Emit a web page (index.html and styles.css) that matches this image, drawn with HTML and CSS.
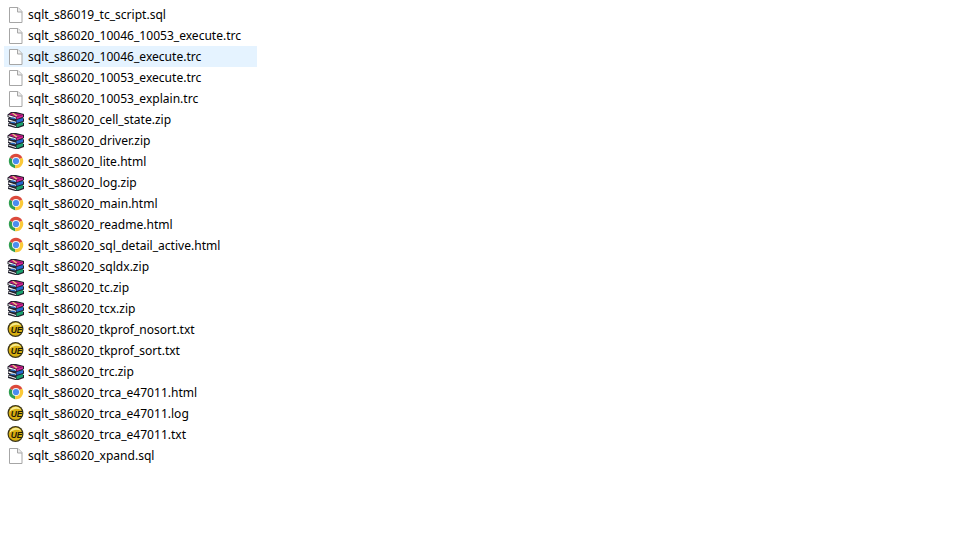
FILE: index.html
```html
<!DOCTYPE html>
<html lang="en">
<head>
<meta charset="utf-8">
<title>Files</title>
<link rel="stylesheet" href="styles.css">
</head>
<body>
<svg class="sprite" aria-hidden="true">
  <symbol id="doc" viewBox="0 0 18 17">
    <path d="M3.500 1.500h8.500l4 4v11h-12.500z" fill="#fff" stroke="#a6a6a6"/>
    <path d="M11.500 1.500v4.500h4.500" fill="#ececec" stroke="#a6a6a6"/>
  </symbol>
  <symbol id="rar" viewBox="0 0 18 17">
    <path d="M5 1h5l8 2v3l-1.500 1 1.500.5v3l-1.500 1 1.500.5v3l-7 2.500-9-2.500v-2.500l1.500-1-1.500-.5V7.500L3 6.500 1.500 6V3.500z" fill="#22222e"/>
    <path d="M2.500 4l7.500 2.500V8L2.500 5.500zM2.500 8.200l7.500 2.500v1.500l-7.500-2.500zM2.500 12.500l7.500 2.500v1l-7.500-2.500z" fill="#f6f6f6"/>
    <path d="M3 3.500 6 1.800l11 1.700-6.500 2.500z" fill="#c2187c"/>
    <path d="M6 2.300l1.500-.4 4 2.900-1.600.5z" fill="#e6d47a"/>
    <path d="M10.500 6.200l6.500-2.400v2l-6.500 2.400z" fill="#d81e96"/>
    <path d="M10.500 8.900l6.500-2v3l-6.500 2.200z" fill="#2468d0"/>
    <path d="M10.500 13.100l6.500-2v3l-6.500 2.400z" fill="#18a06c"/>
    <path d="M3.500 7.300 7 6.300l3 1.300-1.500.7zM3.500 11.500 7 10.500l3 1.300-1.500.7z" fill="#2c6cc0"/>
  </symbol>
  <symbol id="chrome" viewBox="0 0 18 17">
    <path d="M3.760 4.400A7.200 7.200 0 0 0 9 15.130L10 8z" fill="#2f9e50"/>
    <path d="M16.240 4.400A7.200 7.200 0 0 1 9 15.130L10 8z" fill="#fbc938"/>
    <path d="M3.760 4.400A7.200 7.200 0 0 1 16.240 4.400L10 8z" fill="#dc4a3c"/>
    <circle cx="10" cy="8" r="4" fill="#f4f4f4"/>
    <circle cx="10" cy="8" r="3.100" fill="#4a8cf0"/>
  </symbol>
  <symbol id="ue" viewBox="0 0 18 17">
    <circle cx="9.500" cy="8" r="8" fill="#3a3418"/>
    <circle cx="9.500" cy="8" r="6.800" fill="#d8b010"/>
    <path d="M3.500 7A6.200 6.200 0 0 1 15 5 9 9 0 0 0 3.500 7z" fill="#f8ec90"/>
    <text class="ue-mark" x="4.700" y="12">UE</text>
  </symbol>
</svg>
<ul class="files">
  <li class="file"><svg class="icon"><use href="#doc"/></svg><span class="name">sqlt_s86019_tc_script.sql</span></li>
  <li class="file"><svg class="icon"><use href="#doc"/></svg><span class="name">sqlt_s86020_10046_10053_execute.trc</span></li>
  <li class="file hover"><svg class="icon"><use href="#doc"/></svg><span class="name">sqlt_s86020_10046_execute.trc</span></li>
  <li class="file"><svg class="icon"><use href="#doc"/></svg><span class="name">sqlt_s86020_10053_execute.trc</span></li>
  <li class="file"><svg class="icon"><use href="#doc"/></svg><span class="name">sqlt_s86020_10053_explain.trc</span></li>
  <li class="file"><svg class="icon"><use href="#rar"/></svg><span class="name">sqlt_s86020_cell_state.zip</span></li>
  <li class="file"><svg class="icon"><use href="#rar"/></svg><span class="name">sqlt_s86020_driver.zip</span></li>
  <li class="file"><svg class="icon"><use href="#chrome"/></svg><span class="name">sqlt_s86020_lite.html</span></li>
  <li class="file"><svg class="icon"><use href="#rar"/></svg><span class="name">sqlt_s86020_log.zip</span></li>
  <li class="file"><svg class="icon"><use href="#chrome"/></svg><span class="name">sqlt_s86020_main.html</span></li>
  <li class="file"><svg class="icon"><use href="#chrome"/></svg><span class="name">sqlt_s86020_readme.html</span></li>
  <li class="file"><svg class="icon"><use href="#chrome"/></svg><span class="name">sqlt_s86020_sql_detail_active.html</span></li>
  <li class="file"><svg class="icon"><use href="#rar"/></svg><span class="name">sqlt_s86020_sqldx.zip</span></li>
  <li class="file"><svg class="icon"><use href="#rar"/></svg><span class="name">sqlt_s86020_tc.zip</span></li>
  <li class="file"><svg class="icon"><use href="#rar"/></svg><span class="name">sqlt_s86020_tcx.zip</span></li>
  <li class="file"><svg class="icon"><use href="#ue"/></svg><span class="name">sqlt_s86020_tkprof_nosort.txt</span></li>
  <li class="file"><svg class="icon"><use href="#ue"/></svg><span class="name">sqlt_s86020_tkprof_sort.txt</span></li>
  <li class="file"><svg class="icon"><use href="#rar"/></svg><span class="name">sqlt_s86020_trc.zip</span></li>
  <li class="file"><svg class="icon"><use href="#chrome"/></svg><span class="name">sqlt_s86020_trca_e47011.html</span></li>
  <li class="file"><svg class="icon"><use href="#ue"/></svg><span class="name">sqlt_s86020_trca_e47011.log</span></li>
  <li class="file"><svg class="icon"><use href="#ue"/></svg><span class="name">sqlt_s86020_trca_e47011.txt</span></li>
  <li class="file"><svg class="icon"><use href="#doc"/></svg><span class="name">sqlt_s86020_xpand.sql</span></li>
</ul>
</body>
</html>
```

FILE: styles.css
```css
html, body {
  margin: 0;
  padding: 0;
  background: #fff;
  overflow: hidden;
}
.sprite {
  display: none;
}
.files {
  list-style: none;
  margin: 0;
  padding: 4px 0 0 4px;
  width: 253px;
  font-family: "Noto Sans", "Liberation Sans", sans-serif;
  font-size: 12.05px;
  color: #000;
}
.file {
  display: flex;
  align-items: flex-start;
  gap: 4px;
  height: 21px;
  padding-left: 2px;
}
.hover {
  background: #e5f3ff;
}
.icon {
  flex: none;
  width: 18px;
  height: 17px;
  margin-top: 2px;
}
.name {
  white-space: nowrap;
  line-height: 21px;
}
.ue-mark {
  font-family: "Liberation Sans", sans-serif;
  font-size: 8.500px;
  font-weight: 700;
  font-style: italic;
  fill: #1c1808;
}
```
